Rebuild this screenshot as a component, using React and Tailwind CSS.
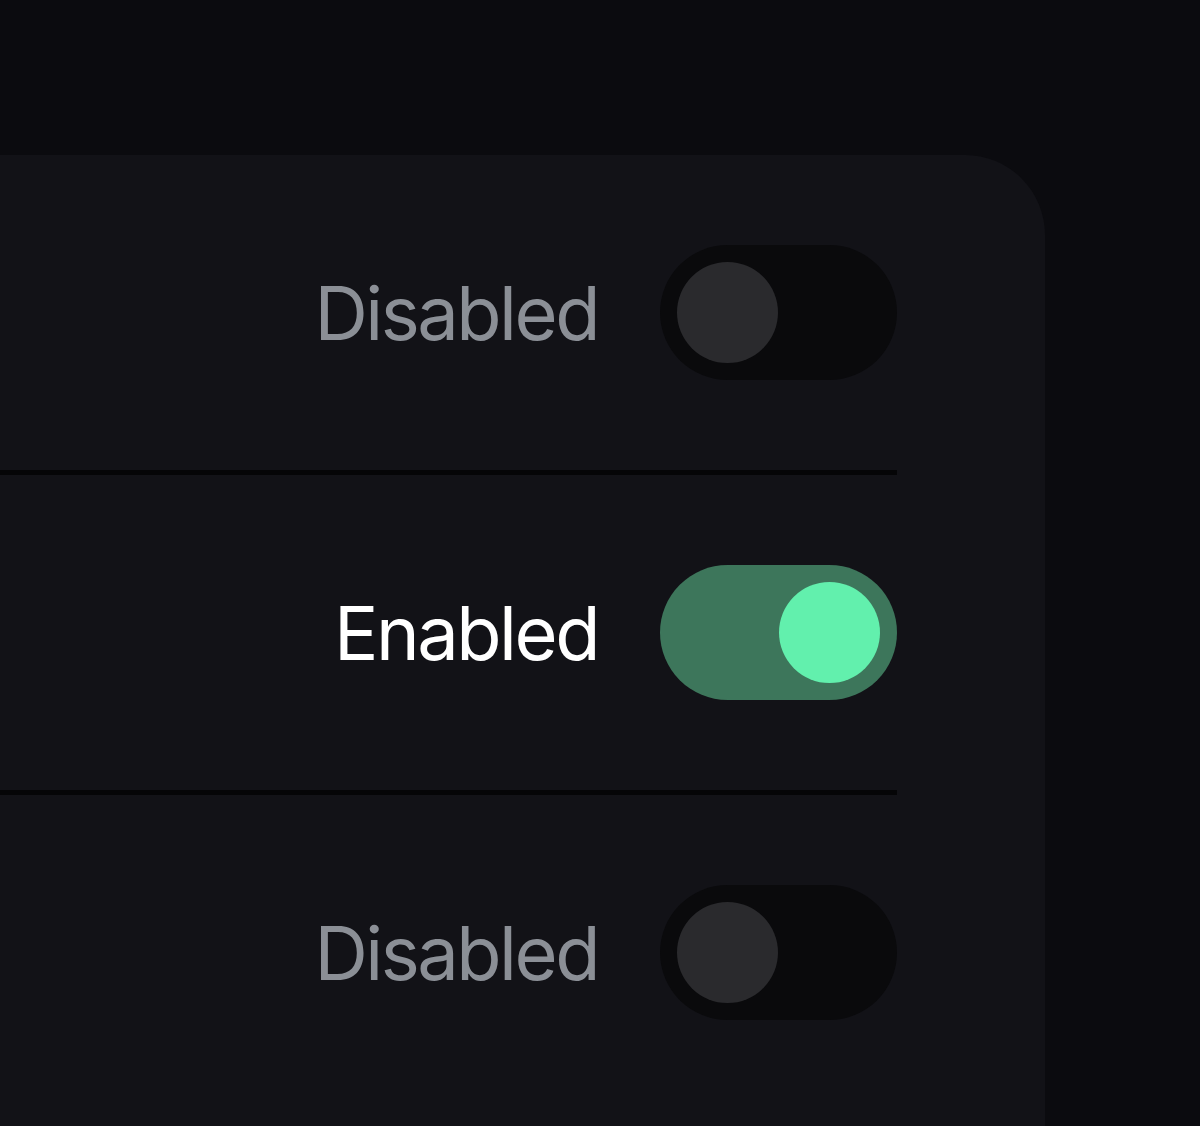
import React, { useState } from 'react';

const Toggle = ({ on, onClick }) => (
  <button
    onClick={onClick}
    className={`w-[237px] h-[135px] rounded-full p-[17px] flex items-center transition-colors ${
      on ? 'bg-[#3d765b] justify-end' : 'bg-[#0a0a0c] justify-start'
    }`}
  >
    <span className={`block w-[101px] h-[101px] rounded-full ${on ? 'bg-[#62f0ad]' : 'bg-[#2a2a2d]'}`} />
  </button>
);

export default function App() {
  const [states, setStates] = useState([false, true, false]);

  const flip = (i) => setStates(prev => prev.map((v, j) => (j === i ? !v : v)));

  return (
    <div className="min-h-[1126px] bg-[#0b0b0f] pt-[155px] overflow-hidden" style={{ fontFamily: 'Inter, "Noto Sans", sans-serif' }}>
      <div className="w-[1045px] min-h-[971px] bg-[#121217] rounded-tr-[80px]">
        <div className="mr-[148px] flex flex-col">
          {states.map((on, i) => (
            <React.Fragment key={i}>
              {i > 0 && <div className="h-[5px] bg-[#050507]" />}
              <div className="h-[315px] flex items-center justify-end gap-[62px]">
                <span className={`text-[74px] leading-none tracking-[-2.5px] ${on ? 'text-white' : 'text-[#8b8f96]'}`}>
                  {on ? 'Enabled' : 'Disabled'}
                </span>
                <Toggle on={on} onClick={() => flip(i)} />
              </div>
            </React.Fragment>
          ))}
        </div>
      </div>
    </div>
  );
}
